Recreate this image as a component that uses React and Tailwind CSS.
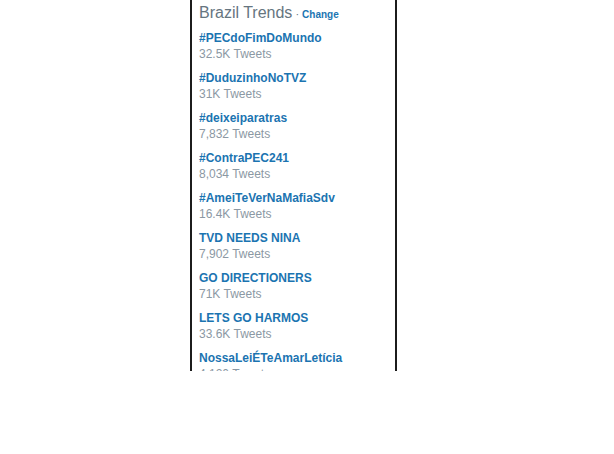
import React from "react";

const trends = [
  { name: "#PECdoFimDoMundo", count: "32.5K Tweets" },
  { name: "#DuduzinhoNoTVZ", count: "31K Tweets" },
  { name: "#deixeiparatras", count: "7,832 Tweets" },
  { name: "#ContraPEC241", count: "8,034 Tweets" },
  { name: "#AmeiTeVerNaMafiaSdv", count: "16.4K Tweets" },
  { name: "TVD NEEDS NINA", count: "7,902 Tweets" },
  { name: "GO DIRECTIONERS", count: "71K Tweets" },
  { name: "LETS GO HARMOS", count: "33.6K Tweets" },
  { name: "NossaLeiÉTeAmarLetícia", count: "4,120 Tweets" },
];

export default function App() {
  return (
    <div className="w-[614px] h-[454px] bg-white" style={{ fontFamily: "'Liberation Sans', Arial, sans-serif" }}>
      <div className="ml-[190px] w-[207px] h-[371px] border-x-2 border-[#1c1c1c] overflow-hidden pl-[7px] pt-[3px]">
        <div className="flex items-baseline leading-[20px]">
          <span className="text-[16px] text-[#66757f]">Brazil Trends</span>
          <span className="text-[11px] text-[#66757f] mx-[3px]">·</span>
          <span className="text-[10px] font-bold text-[#1b75b2]">Change</span>
        </div>
        <div className="flex flex-col gap-[7px] mt-[5px]">
          {trends.map((t) => (
            <div key={t.name} className="flex flex-col">
              <span className="text-[12px] leading-[16px] font-bold text-[#1b74b1]">{t.name}</span>
              <span className="text-[12px] leading-[17px] text-[#8b98a3]">{t.count}</span>
            </div>
          ))}
        </div>
      </div>
    </div>
  );
}
